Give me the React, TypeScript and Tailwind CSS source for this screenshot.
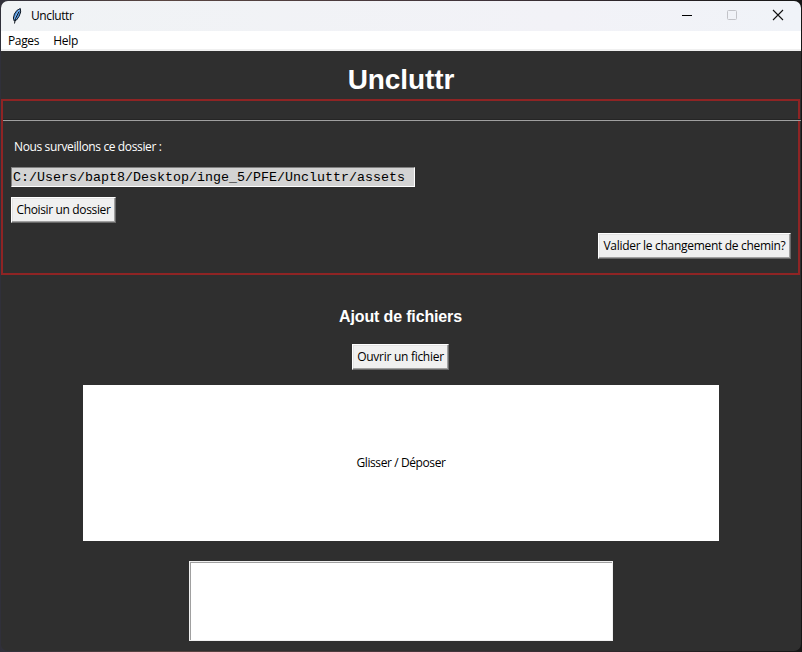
import React from "react";

const UI = "font-['Open_Sans','Noto_Sans',sans-serif] text-[12px] leading-4 whitespace-pre";

function Feather() {
  return (
    <svg width="12" height="18" viewBox="0 0 12 18" className="shrink-0">
      <path d="M9.3 1.5 L5.8 3.5 L3.4 7 L2.4 11 L3.2 14 L5.5 13 L8 9.5 L9.7 5 Z" fill="#4f93dc" stroke="#111a26" strokeWidth="1" />
      <path d="M8.3 3 L5 9 L3.8 12" stroke="#8fc2f7" strokeWidth="1.1" fill="none" />
      <path d="M8 4.5 L4.5 11.5 L3.5 16.5" stroke="#10141c" strokeWidth="1" fill="none" />
    </svg>
  );
}

function TkButton({ width, tracking, children }: { width: string; tracking: string; children: string }) {
  return (
    <button
      className={`flex h-[26px] items-center justify-center border border-t-white border-l-white border-r-[#696969] border-b-[#696969] bg-[#f0f0f0] text-black shadow-[inset_-1px_-1px_0_#a0a0a0,inset_1px_1px_0_#e3e3e3] ${width} ${UI} ${tracking}`}
    >
      {children}
    </button>
  );
}

export default function App() {
  return (
    <div className="h-[652px] w-[802px] overflow-hidden bg-[linear-gradient(90deg,#30303a,#5a4642_20%,#40333a_60%,#161616)] p-px">
      <div className="flex h-[650px] w-[800px] flex-col overflow-hidden rounded-[7px] bg-[#2f2f2f]">
        <header className="flex h-[30px] shrink-0 items-center bg-[linear-gradient(90deg,#f0f3f5,#f2f2f7_70%,#f0f3f8)] pl-[10px] text-black">
          <Feather />
          <span className={`ml-2 ${UI} tracking-[-0.4px]`}>Uncluttr</span>
          <div className="ml-auto flex">
            <svg width="46" height="30" viewBox="0 0 46 30" shapeRendering="crispEdges">
              <path d="M18 14.5h10" stroke="#000" />
            </svg>
            <svg width="46" height="30" viewBox="0 0 46 30">
              <rect x="17.5" y="9.5" width="9" height="9" rx="1" fill="none" stroke="#c2c3c8" />
            </svg>
            <svg width="45" height="30" viewBox="0 0 45 30">
              <path d="M17 9l10 10M27 9l-10 10" stroke="#111" strokeWidth="1.1" />
            </svg>
          </div>
        </header>
        <nav className={`flex h-5 shrink-0 items-center gap-[14px] border-b-2 border-[#f0f0f0] bg-white pt-0.5 pl-[7px] text-black ${UI}`}>
          <span className="tracking-[-0.35px]">Pages</span>
          <span className="tracking-[-0.25px]">Help</span>
        </nav>
        <h1 className="flex h-12 shrink-0 items-center justify-center pt-[10px] font-['Liberation_Sans',Arial,sans-serif] text-[28px] leading-8 font-bold tracking-[-0.1px] text-white">
          Uncluttr
        </h1>
        <section className="h-[176px] w-[799px] shrink-0 border-2 border-[#8f2424]">
          <hr className="mt-[18px] -mr-0.5 w-[798px] border-t border-b border-t-[#252525] border-b-[#a0a0a0]" />
          <div className="flex flex-col items-start pr-[7px] pl-2">
            <p className={`mt-[18px] ml-[3px] text-white ${UI} tracking-[-0.37px]`}>Nous surveillons ce dossier :</p>
            <div className="mt-3 flex h-5 w-[404px] items-center border border-t-[#808080] border-l-[#808080] border-r-white border-b-white bg-[#d3d3d3] pt-0.5 pl-px font-['Liberation_Mono','Courier_New',monospace] text-[13.33px] leading-4 text-black">
              C:/Users/bapt8/Desktop/inge_5/PFE/Uncluttr/assets
            </div>
            <div className="mt-[10px]">
              <TkButton width="w-[105px]" tracking="tracking-[-0.35px]">Choisir un dossier</TkButton>
            </div>
            <div className="mt-[10px] self-end">
              <TkButton width="w-[193px]" tracking="tracking-[-0.3px]">Valider le changement de chemin?</TkButton>
            </div>
          </div>
        </section>
        <main className="flex flex-col items-center">
          <h2 className="mt-8 mr-px font-['Liberation_Sans',Arial,sans-serif] text-[16px] leading-5 font-bold tracking-[-0.15px] text-white">Ajout de fichiers</h2>
          <div className="mt-[17px] mr-px">
            <TkButton width="w-[97px]" tracking="tracking-[-0.28px]">Ouvrir un fichier</TkButton>
          </div>
          <div className={`mt-[15px] flex h-[156px] w-[636px] items-center justify-center bg-white text-black ${UI} tracking-[-0.4px]`}>
            Glisser / Déposer
          </div>
          <div className="mt-5 h-20 w-[424px] border border-[#f0f0f0] bg-white shadow-[inset_1px_1px_0_#a0a0a0]" />
        </main>
      </div>
    </div>
  );
}
